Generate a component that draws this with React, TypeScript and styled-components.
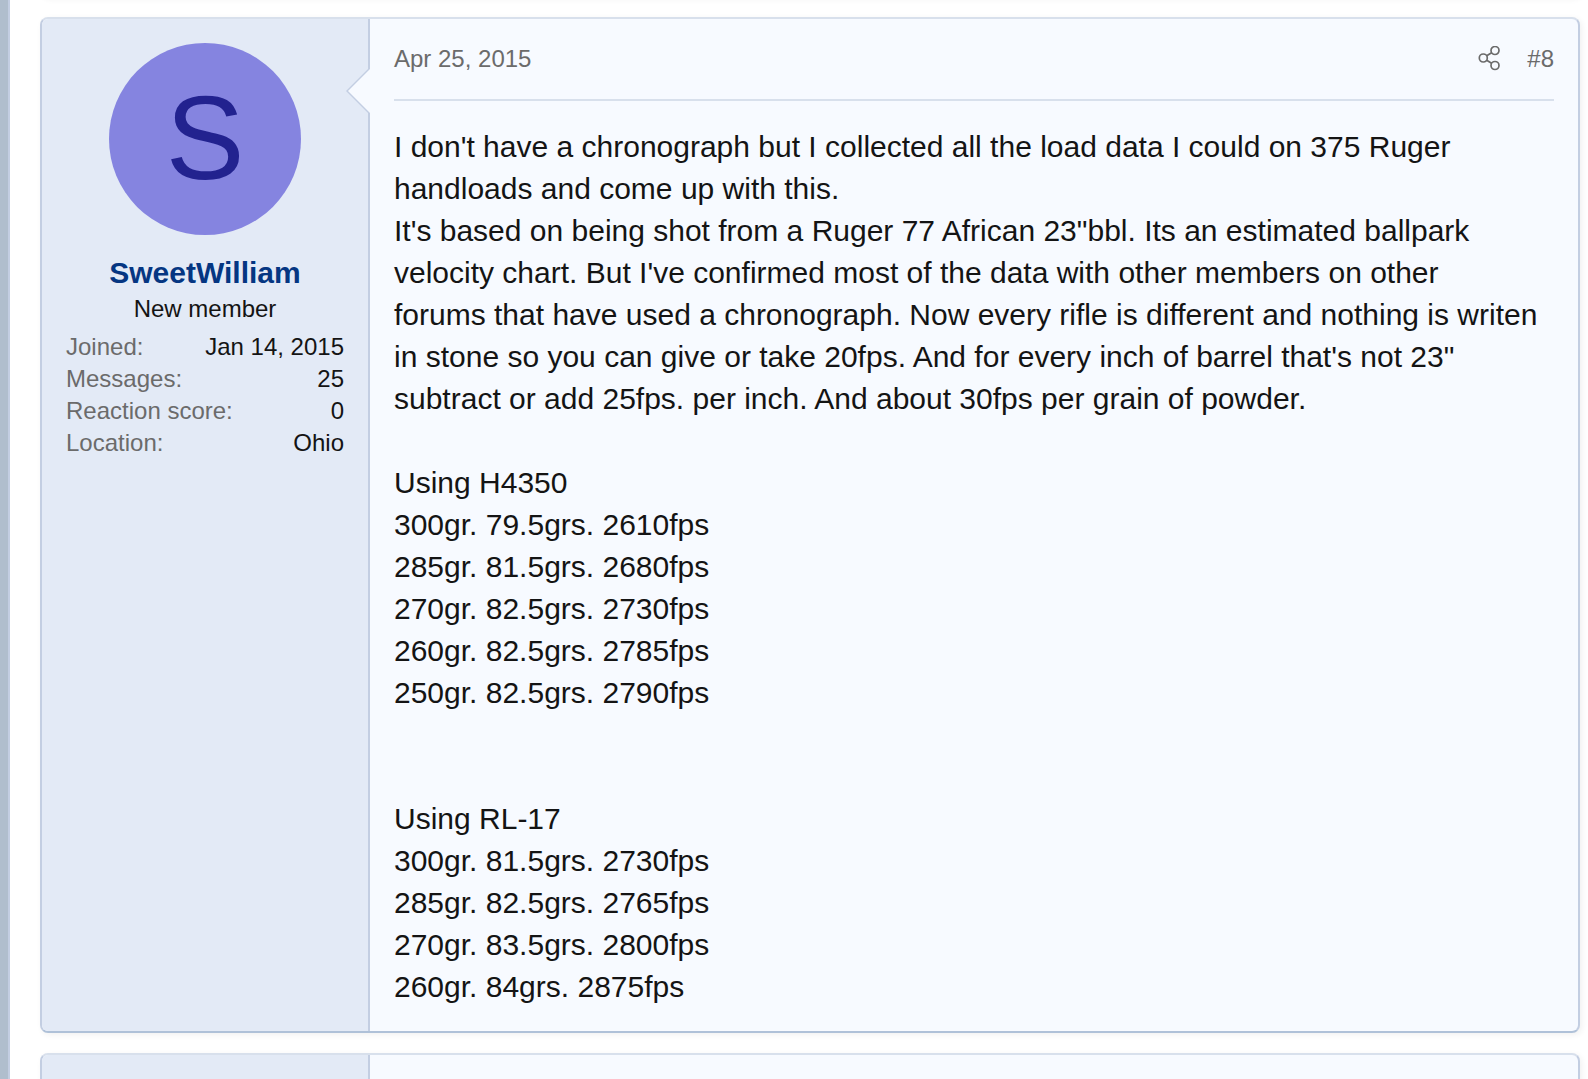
import React from "react";
import styled, { createGlobalStyle } from "styled-components";

const color = {
  gutter: "#b0becd",
  side: "#c3cee2",
  light: "#d8e0ec",
  heavy: "#afc1d8",
  user: "#e3eaf6",
  content: "#f7faff",
  text: "#141414",
  muted: "#6b6b6b",
  link: "#053682",
};

const GlobalStyle = createGlobalStyle`
  *, *::before, *::after { box-sizing: border-box; }
  body {
    margin: 0;
    background: ${color.gutter};
    color: ${color.text};
    font-family: "Helvetica Neue", "Liberation Sans", Arial, sans-serif;
  }
`;

const Page = styled.div`
  height: 100vh;
  padding-left: 8px;
  overflow: hidden;
`;

const Thread = styled.main`
  display: flex;
  flex-direction: column;
  gap: 20px;
  min-height: 100%;
  padding: 0 8px 0 30px;
  border-left: 2px solid ${color.side};
  background: #fff;
`;

const Post = styled.article<{ $place?: "before" | "after" }>`
  display: flex;
  flex-shrink: 0;
  border: 2px solid;
  border-color: ${color.light} ${color.side} ${color.heavy};
  border-radius: 8px;
  background: ${color.content};
  box-shadow: 2px 2px 6px rgba(0, 0, 0, 0.06);
  overflow: hidden;
  height: ${(p) => (p.$place ? "100px" : "auto")};
  margin-top: ${(p) => (p.$place === "before" ? "-103px" : "0")};
`;

const UserCell = styled.aside`
  position: relative;
  flex: 0 0 328px;
  display: flex;
  flex-direction: column;
  align-items: center;
  padding: 24px;
  border-right: 2px solid ${color.side};
  background: ${color.user};
`;

const Notch = styled.span`
  &::before,
  &::after {
    content: "";
    position: absolute;
    top: 50px;
    right: 0;
    border: 22px solid transparent;
    border-left: 0;
    border-right-color: ${color.side};
  }
  &::after {
    right: -2px;
    border-right-color: ${color.content};
  }
`;

const Avatar = styled.a`
  display: flex;
  align-items: center;
  justify-content: center;
  width: 192px;
  height: 192px;
  border-radius: 50%;
  background: #8584e0;
  color: #22228f;
  font-size: 118px;
  line-height: 190px;
  padding-bottom: 2px;
  text-decoration: none;
`;

const UserName = styled.a`
  margin-top: 18px;
  color: ${color.link};
  font-size: 30px;
  font-weight: 700;
  line-height: 40px;
  text-decoration: none;
`;

const UserTitle = styled.div`
  font-size: 24px;
  line-height: 32px;
`;

const Stats = styled.dl`
  align-self: stretch;
  margin: 6px 0 0;
  font-size: 24px;
  line-height: 32px;
`;

const Stat = styled.div`
  display: flex;
  justify-content: space-between;
`;

const StatLabel = styled.dt`
  color: ${color.muted};
`;

const StatValue = styled.dd`
  margin: 0;
`;

const Content = styled.div`
  flex: 1;
  min-width: 0;
  padding: 24px 24px 23px;
`;

const Header = styled.header`
  display: flex;
  justify-content: space-between;
  padding-bottom: 24px;
  border-bottom: 2px solid ${color.light};
  color: ${color.muted};
  font-size: 24px;
  line-height: 32px;
`;

const HeaderLink = styled.a`
  display: flex;
  align-items: center;
  color: inherit;
  text-decoration: none;
`;

const Actions = styled.div`
  display: flex;
  align-items: center;
  gap: 27px;
`;

const Body = styled.div`
  padding-top: 25px;
  font-size: 30px;
  line-height: 42px;
`;

const Paragraph = styled.p`
  margin: 0;
`;

const LoadGroup = styled.section<{ $gap: number }>`
  margin-top: ${(p) => p.$gap * 42}px;
`;

const ShareIcon = () => (
  <svg width="24" height="26" viewBox="0 0 24 26" fill="none" stroke="currentColor" strokeWidth="1.7" aria-hidden="true">
    <circle cx="19" cy="4.5" r="4" />
    <circle cx="7.3" cy="12" r="4" />
    <circle cx="19" cy="19.5" r="4" />
    <path d="M10.7 9.8 15.6 6.7M10.7 14.2 15.6 17.3" />
  </svg>
);

const stats = [
  ["Joined:", "Jan 14, 2015"],
  ["Messages:", "25"],
  ["Reaction score:", "0"],
  ["Location:", "Ohio"],
];

const loads = [
  {
    gap: 1,
    title: "Using H4350",
    lines: [
      "300gr. 79.5grs. 2610fps",
      "285gr. 81.5grs. 2680fps",
      "270gr. 82.5grs. 2730fps",
      "260gr. 82.5grs. 2785fps",
      "250gr. 82.5grs. 2790fps",
    ],
  },
  {
    gap: 2,
    title: "Using RL-17",
    lines: [
      "300gr. 81.5grs. 2730fps",
      "285gr. 82.5grs. 2765fps",
      "270gr. 83.5grs. 2800fps",
      "260gr. 84grs. 2875fps",
    ],
  },
];

export default function App() {
  return (
    <>
      <GlobalStyle />
      <Page>
        <Thread>
          <Post $place="before" aria-hidden="true">
            <UserCell />
          </Post>
          <Post>
            <UserCell>
              <Notch />
              <Avatar href="#member" aria-label="SweetWilliam">S</Avatar>
              <UserName href="#member">SweetWilliam</UserName>
              <UserTitle>New member</UserTitle>
              <Stats>
                {stats.map(([label, value]) => (
                  <Stat key={label}>
                    <StatLabel>{label}</StatLabel>
                    <StatValue>{value}</StatValue>
                  </Stat>
                ))}
              </Stats>
            </UserCell>
            <Content>
              <Header>
                <HeaderLink href="#post-8">
                  <time dateTime="2015-04-25">Apr 25, 2015</time>
                </HeaderLink>
                <Actions>
                  <HeaderLink href="#share" aria-label="Share">
                    <ShareIcon />
                  </HeaderLink>
                  <HeaderLink href="#post-8">#8</HeaderLink>
                </Actions>
              </Header>
              <Body>
                <Paragraph>
                  I don't have a chronograph but I collected all the load data I could on 375 Ruger handloads and come up
                  with this.
                </Paragraph>
                <Paragraph>
                  It's based on being shot from a Ruger 77 African 23"bbl. Its an estimated ballpark velocity chart. But
                  I've confirmed most of the data with other members on other
                  <br />
                  forums that have used a chronograph. Now every rifle is different and nothing is writen
                  <br />
                  in stone so you can give or take 20fps. And for every inch of barrel that's not 23"
                  <br />
                  subtract or add 25fps. per inch. And about 30fps per grain of powder.
                </Paragraph>
                {loads.map((group) => (
                  <LoadGroup key={group.title} $gap={group.gap}>
                    <Paragraph>{group.title}</Paragraph>
                    {group.lines.map((line) => (
                      <Paragraph key={line}>{line}</Paragraph>
                    ))}
                  </LoadGroup>
                ))}
              </Body>
            </Content>
          </Post>
          <Post $place="after" aria-hidden="true">
            <UserCell />
          </Post>
        </Thread>
      </Page>
    </>
  );
}
